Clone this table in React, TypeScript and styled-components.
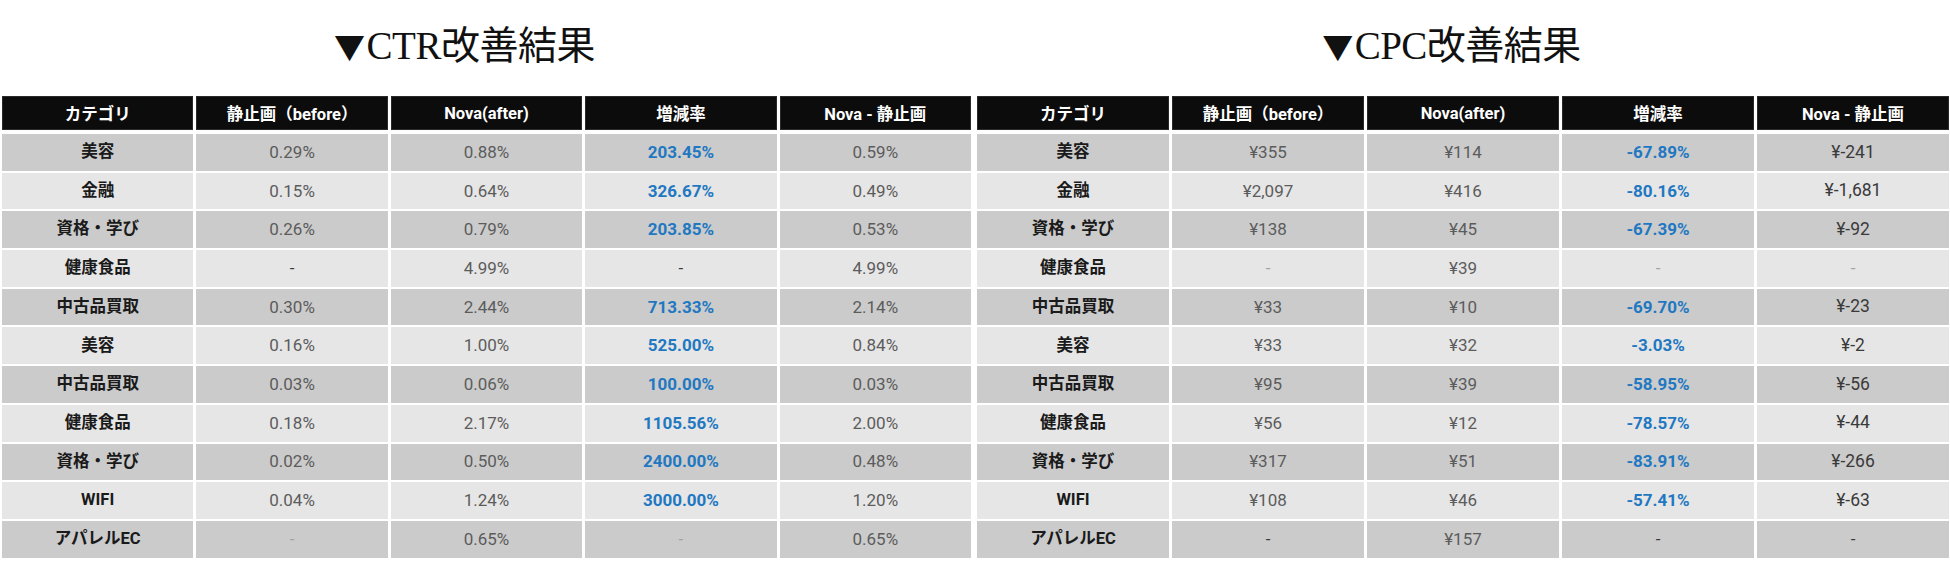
import React from "react";
import styled, { createGlobalStyle, css } from "styled-components";

const GlobalStyle = createGlobalStyle`
  html, body {
    margin: 0;
    padding: 0;
    background: #ffffff;
  }
  body {
    font-family: "Roboto", "Noto Sans CJK JP", sans-serif;
  }
`;

const Page = styled.div`
  width: 1950px;
  display: grid;
  grid-template-columns: 973px 977px;
`;

const Section = styled.section`
  display: flex;
  flex-direction: column;
`;

const Title = styled.h2<{ $shift: number }>`
  margin: 0;
  height: 96px;
  box-sizing: border-box;
  padding: 0 ${(p) => p.$shift}px 6px 0;
  display: flex;
  align-items: center;
  justify-content: center;
  font-family: "Liberation Serif", "Noto Sans CJK JP", serif;
  font-weight: 400;
  font-size: 39px;
  line-height: 1;
  color: #111111;
  letter-spacing: -0.5px;
`;

const Marker = styled.span`
  font-family: "Noto Sans CJK JP", sans-serif;
  font-size: 31px;
  margin-right: 2px;
`;

const Table = styled.div<{ $padLeft: number; $padRight: number }>`
  display: grid;
  grid-template-columns: repeat(5, 1fr);
  grid-template-rows: 36px;
  grid-auto-rows: 36.7px;
  column-gap: 3px;
  row-gap: 2px;
  padding: 0 ${(p) => p.$padRight}px 0 ${(p) => p.$padLeft}px;
`;

const Row = styled.div`
  display: contents;
`;

const HeaderCell = styled.div`
  background: #0c0c0c;
  color: #ffffff;
  display: flex;
  align-items: center;
  justify-content: center;
  font-family: "Roboto", "Noto Sans CJK JP", sans-serif;
  font-weight: 700;
  font-size: 16.5px;
  margin-bottom: 2px;
  box-shadow: inset 0 0 0 1px #2a2a2a;
`;

type Kind = "cat" | "val" | "up" | "muted" | "dark" | "wide";

const kindStyles: Record<Kind, ReturnType<typeof css>> = {
  cat: css`
    font-family: "Roboto", "Noto Sans CJK JP", sans-serif;
    font-weight: 700;
    font-size: 16.5px;
    color: #1a1a1a;
  `,
  val: css`
    font-weight: 400;
    font-size: 17px;
    color: #5c5c5c;
  `,
  up: css`
    font-weight: 700;
    font-size: 17px;
    color: #1f78c1;
  `,
  muted: css`
    font-weight: 400;
    font-size: 17px;
    color: #a2a2a2;
  `,
  dark: css`
    font-weight: 400;
    font-size: 17px;
    color: #3a3a3a;
  `,
  wide: css`
    font-weight: 400;
    font-size: 17.5px;
    color: #3a3a3a;
  `,
};

const Cell = styled.div<{ $odd: boolean; $kind: Kind }>`
  background: ${(p) => (p.$odd ? "#cbcbcb" : "#e6e6e6")};
  display: flex;
  align-items: center;
  justify-content: center;
  line-height: 1;
  ${(p) => kindStyles[p.$kind]}
`;

type CellDef = [string, Kind];
type RowDef = CellDef[];

const headers = ["カテゴリ", "静止画（before）", "Nova(after)", "増減率", "Nova - 静止画"];

const ctrRows: RowDef[] = [
  [["美容", "cat"], ["0.29%", "val"], ["0.88%", "val"], ["203.45%", "up"], ["0.59%", "val"]],
  [["金融", "cat"], ["0.15%", "val"], ["0.64%", "val"], ["326.67%", "up"], ["0.49%", "val"]],
  [["資格・学び", "cat"], ["0.26%", "val"], ["0.79%", "val"], ["203.85%", "up"], ["0.53%", "val"]],
  [["健康食品", "cat"], ["-", "dark"], ["4.99%", "val"], ["-", "dark"], ["4.99%", "val"]],
  [["中古品買取", "cat"], ["0.30%", "val"], ["2.44%", "val"], ["713.33%", "up"], ["2.14%", "val"]],
  [["美容", "cat"], ["0.16%", "val"], ["1.00%", "val"], ["525.00%", "up"], ["0.84%", "val"]],
  [["中古品買取", "cat"], ["0.03%", "val"], ["0.06%", "val"], ["100.00%", "up"], ["0.03%", "val"]],
  [["健康食品", "cat"], ["0.18%", "val"], ["2.17%", "val"], ["1105.56%", "up"], ["2.00%", "val"]],
  [["資格・学び", "cat"], ["0.02%", "val"], ["0.50%", "val"], ["2400.00%", "up"], ["0.48%", "val"]],
  [["WIFI", "cat"], ["0.04%", "val"], ["1.24%", "val"], ["3000.00%", "up"], ["1.20%", "val"]],
  [["アパレルEC", "cat"], ["-", "muted"], ["0.65%", "val"], ["-", "muted"], ["0.65%", "val"]],
];

const cpcRows: RowDef[] = [
  [["美容", "cat"], ["¥355", "val"], ["¥114", "val"], ["-67.89%", "up"], ["¥-241", "wide"]],
  [["金融", "cat"], ["¥2,097", "val"], ["¥416", "val"], ["-80.16%", "up"], ["¥-1,681", "wide"]],
  [["資格・学び", "cat"], ["¥138", "val"], ["¥45", "val"], ["-67.39%", "up"], ["¥-92", "wide"]],
  [["健康食品", "cat"], ["-", "muted"], ["¥39", "val"], ["-", "muted"], ["-", "muted"]],
  [["中古品買取", "cat"], ["¥33", "val"], ["¥10", "val"], ["-69.70%", "up"], ["¥-23", "wide"]],
  [["美容", "cat"], ["¥33", "val"], ["¥32", "val"], ["-3.03%", "up"], ["¥-2", "wide"]],
  [["中古品買取", "cat"], ["¥95", "val"], ["¥39", "val"], ["-58.95%", "up"], ["¥-56", "wide"]],
  [["健康食品", "cat"], ["¥56", "val"], ["¥12", "val"], ["-78.57%", "up"], ["¥-44", "wide"]],
  [["資格・学び", "cat"], ["¥317", "val"], ["¥51", "val"], ["-83.91%", "up"], ["¥-266", "wide"]],
  [["WIFI", "cat"], ["¥108", "val"], ["¥46", "val"], ["-57.41%", "up"], ["¥-63", "wide"]],
  [["アパレルEC", "cat"], ["-", "dark"], ["¥157", "val"], ["-", "dark"], ["-", "dark"]],
];

interface ResultTableProps {
  title: string;
  rows: RowDef[];
  padLeft: number;
  padRight: number;
  shift: number;
}

const ResultTable: React.FC<ResultTableProps> = ({ title, rows, padLeft, padRight, shift }) => (
  <Section>
    <Title $shift={shift}>
      <Marker>▼</Marker>
      {title}
    </Title>
    <Table $padLeft={padLeft} $padRight={padRight}>
      <Row>
        {headers.map((h) => (
          <HeaderCell key={h}>{h}</HeaderCell>
        ))}
      </Row>
      {rows.map((r, i) => (
        <Row key={i}>
          {r.map(([text, kind], j) => (
            <Cell key={j} $odd={i % 2 === 0} $kind={kind}>
              {text}
            </Cell>
          ))}
        </Row>
      ))}
    </Table>
  </Section>
);

export default function App() {
  return (
    <>
      <GlobalStyle />
      <Page>
        <ResultTable title="CTR改善結果" rows={ctrRows} padLeft={2} padRight={2} shift={44} />
        <ResultTable title="CPC改善結果" rows={cpcRows} padLeft={4} padRight={1} shift={20} />
      </Page>
    </>
  );
}
